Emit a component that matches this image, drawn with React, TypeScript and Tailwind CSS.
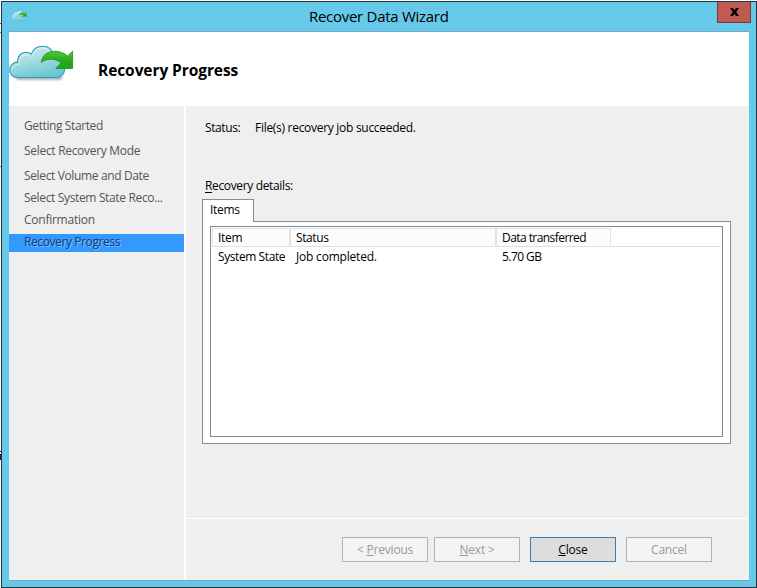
import React from "react";

function CloudIcon({ className, small }: { className: string; small?: boolean }) {
  const id = small ? "s" : "l";
  return (
    <svg className={className} viewBox="0 0 66 38" preserveAspectRatio="none">
      <defs>
        <linearGradient id={`cloud-${id}`} x1="0.2" y1="0" x2="0.6" y2="1">
          <stop offset="0" stopColor="#d3eef1" />
          <stop offset="0.5" stopColor="#a0dae1" />
          <stop offset="1" stopColor="#66c6d2" />
        </linearGradient>
        <linearGradient id={`arrow-${id}`} x1="0" y1="0" x2="0" y2="1">
          <stop offset="0" stopColor="#50c836" />
          <stop offset="0.6" stopColor="#27a81b" />
          <stop offset="1" stopColor="#22a517" />
        </linearGradient>
        <filter id={`soft-${id}`} x="-10%" y="-50%" width="120%" height="200%">
          <feGaussianBlur stdDeviation="1" />
        </filter>
      </defs>
      <path d="M4 31 H54 L52 35 H9 Z" fill="#777" opacity="0.55" filter={`url(#soft-${id})`} />
      <path
        d="M8.5 32.500 C4 32.500 .7 29.500 .7 25 C.7 20.500 4.500 17.100 8.700 17.100 C8 11.500 12 7.300 16.500 7.300 C19 7.300 21 8 22.300 9.100 C24 4 28.500 1.200 33.500 1.200 C39 1.200 43 4.500 44.300 9 C51 8.500 56 12.500 56 19 C56 26 55 32.500 47 32.500 Z"
        fill={`url(#cloud-${id})`}
        stroke={small ? "#d5f6fb" : "#279fb4"}
        strokeWidth={small ? "2.500" : "1.100"}
      />
      <path
        d="M2.500 25.500 C3 21.500 6 19.500 10.300 19.300 C9.500 14 12.500 9.800 17 9.800 C20 9.800 22 11 23 12.500 C24.500 7 28 3.200 33.500 3.200 C38 3.200 41 5.600 42.500 8.600"
        fill="none"
        stroke="#e6f8fa"
        strokeWidth="0.900"
        opacity="0.800"
      />
      <path
        d="M32.300 17.600 C33 10 39 6.300 46 6.300 C51.500 6.300 55.600 8.500 58.600 11 L63.600 6.200 V23.500 H46.800 L52 18 C48 13.800 38 12.500 32.300 17.600 Z"
        fill={`url(#arrow-${id})`}
        stroke="#169116"
        strokeWidth="0.800"
      />
    </svg>
  );
}

const steps = [
  { label: "Getting Started", style: "h-[25px] leading-[26px] tracking-[-0.4px]" },
  { label: "Select Recovery Mode", style: "h-[25px] leading-[26px] tracking-[-0.3px]" },
  { label: "Select Volume and Date", style: "h-[25px] leading-[26px] tracking-[-0.36px]" },
  { label: "Select System State Reco...", style: "h-[22px] leading-[20px] tracking-[-0.35px]" },
  { label: "Confirmation", style: "h-[21px] leading-[20px] tracking-[-0.25px]" },
];

function WizardButton({ className, children }: { className: string; children: React.ReactNode }) {
  return (
    <button className={`h-[25px] w-[86px] shrink-0 border text-center leading-[23px] tracking-[-0.2px] ${className}`}>{children}</button>
  );
}

export default function App() {
  return (
    <div className="relative h-[588px] w-[757px] overflow-hidden bg-white pl-px pt-px font-['Open_Sans','Noto_Sans',sans-serif] text-[12px] text-black">
      <div className="absolute left-0 top-[451px] h-px w-px bg-[#222]" />
      <div className="absolute left-0 top-[454px] h-[6px] w-px bg-[#600030]" />
      <div className="absolute left-0 top-[23px] h-px w-px bg-[#555]" />
      <div className="absolute left-0 top-[32px] h-px w-px bg-[#777]" />
      <div className="absolute left-0 top-[166px] h-px w-px bg-[#777]" />
      <div className="flex h-[587px] w-[756px] flex-col border border-[#22343e] bg-[#66c9ea] px-[7px] pb-[6px]">
        <header className="flex h-[29px] shrink-0 items-start">
          <CloudIcon small className="ml-[3px] mt-[9px] h-[9px] w-[15px]" />
          <h1 className="ml-[282px] w-[150px] whitespace-nowrap text-[15px] leading-[29px] tracking-[-0.28px]">Recover Data Wizard</h1>
          <button className="-mr-[2px] ml-auto flex h-[21px] w-[34px] items-center justify-center border border-t-0 border-[#713c40] bg-[#c15a50]">
            <svg className="h-[8px] w-[9px]" viewBox="0 0 9 8">
              <path d="M0 0H3L4.500 2.200L6 0H9L6.200 4L9 8H6L4.500 5.800L3 8H0L2.800 4Z" fill="#000" />
            </svg>
          </button>
        </header>
        <div className="h-px w-full shrink-0 bg-[#73a9c7]" />
        <section className="flex h-[74px] shrink-0 items-start bg-white">
          <CloudIcon className="mt-[13px] h-[38px] w-[66px]" />
          <h2 className="ml-[23px] mt-[28px] whitespace-nowrap text-[15.5px] font-bold leading-5 tracking-[-0.08px]">Recovery Progress</h2>
        </section>
        <div className="flex h-[474px] shrink-0 bg-[#efefef]">
          <nav className="w-[175px] shrink-0 pt-[7px] text-[#555]">
            {steps.map((s) => (
              <div key={s.label} className={`whitespace-nowrap pl-[15px] ${s.style}`}>{s.label}</div>
            ))}
            <div className="mt-[3px] h-[18px] whitespace-nowrap bg-[#3399ff] pl-[15px] leading-[16px] tracking-[-0.4px] text-[#173d70] [text-shadow:1px_1px_0_#78baff]">Recovery Progress</div>
          </nav>
          <div className="w-[2px] shrink-0 bg-white" />
          <main className="flex w-[563px] flex-col">
            <div className="h-[413px] border-b border-white pl-[16px] pt-[12px]">
              <div className="flex h-[20px] whitespace-nowrap pl-[3px] leading-5">
                <span className="w-[50px] tracking-[-0.4px]">Status:</span>
                <span className="tracking-[-0.29px]">File(s) recovery job succeeded.</span>
              </div>
              <div className="mt-[38px] h-[23px] pl-[3px] leading-5 tracking-[-0.35px]"><span className="underline underline-offset-2">R</span>ecovery details:</div>
              <div className="relative z-10 h-[23px] w-[52px] border border-b-0 border-[#898c95] bg-white pl-[7px] leading-[20px] tracking-[-0.3px]">Items</div>
              <div className="-mt-px h-[223px] w-[529px] border border-[#898c95] bg-white px-[7px] pt-[4px]">
                <div className="h-[211px] w-[513px] border border-[#828790] pl-px pt-px">
                  <div className="flex h-[19px] w-[509px] whitespace-nowrap border-b border-[#dedfe1] leading-[19px]">
                    <div className="w-[78px] border-l border-r border-t border-[#e2e3e5] bg-[#fcfcfc] pl-[5px] leading-[18px] tracking-[-0.3px]">Item</div>
                    <div className="w-[206px] border-l border-r border-t border-[#e2e3e5] bg-[#fcfcfc] pl-[5px] leading-[18px] tracking-[-0.4px]">Status</div>
                    <div className="w-[115px] border-l border-r border-t border-[#e2e3e5] bg-[#fcfcfc] pl-[5px] leading-[18px] tracking-[-0.56px]">Data transferred</div>
                  </div>
                  <div className="flex h-[20px] whitespace-nowrap leading-[20px]">
                    <div className="w-[78px] pl-[6px] tracking-[-0.42px]">System State</div>
                    <div className="w-[206px] pl-[6px] tracking-[-0.2px]">Job completed.</div>
                    <div className="pl-[6px] tracking-[-0.55px]">5.70 GB</div>
                  </div>
                </div>
              </div>
            </div>
            <footer className="flex pl-[156px] pt-[18px]">
              <WizardButton className="border-[#adb2b5] bg-[#f4f4f4] text-[#999]">&lt; <u>P</u>revious</WizardButton>
              <WizardButton className="ml-[6px] border-[#adb2b5] bg-[#f4f4f4] text-[#999]"><u>N</u>ext &gt;</WizardButton>
              <WizardButton className="ml-[10px] border-[#3c7fb1] bg-[#dddddd]"><u>C</u>lose</WizardButton>
              <WizardButton className="ml-[10px] border-[#adb2b5] bg-[#f4f4f4] text-[#999]">Cancel</WizardButton>
            </footer>
          </main>
        </div>
        <div className="h-px w-full shrink-0 bg-[#73a9c7]" />
      </div>
    </div>
  );
}
